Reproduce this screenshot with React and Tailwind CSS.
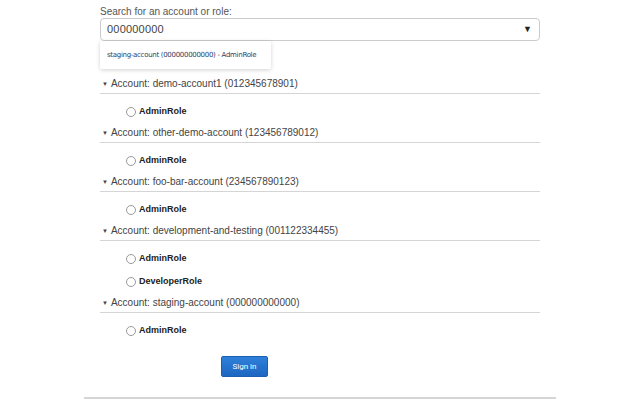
import React from 'react';

const accounts = [
  { name: 'demo-account1', id: '012345678901', roles: ['AdminRole'] },
  { name: 'other-demo-account', id: '123456789012', roles: ['AdminRole'] },
  { name: 'foo-bar-account', id: '234567890123', roles: ['AdminRole'] },
  { name: 'development-and-testing', id: '001122334455', roles: ['AdminRole', 'DeveloperRole'] },
  { name: 'staging-account', id: '000000000000', roles: ['AdminRole'] },
];

function AccountBlock({ account }) {
  return (
    <div>
      <div className="flex items-center h-[20px] border-b border-[#d5d5d5] text-[10px] text-[#444]">
        <span className="ml-[2px] mr-[3px] text-[6px] leading-none">▼</span>
        <span>Account: {account.name} ({account.id})</span>
      </div>
      <div className="pt-[6px]">
        {account.roles.map((role) => (
          <div key={role} className="flex items-center h-[23px] pl-[26px]">
            <span className="w-[10px] h-[10px] rounded-full border border-[#999] bg-white mr-[3px]"></span>
            <span className="text-[9px] font-bold text-[#222]">{role}</span>
          </div>
        ))}
      </div>
    </div>
  );
}

export default function App() {
  return (
    <div className="w-[640px] h-[400px] bg-white overflow-hidden font-['Liberation_Sans',Arial,sans-serif]">
      <div className="w-[472px] mx-auto pb-[20px] border-b-2 border-[#d5d5d5]">
        <div className="w-[440px] mx-auto pt-[5px]">
          <label className="block text-[10px] text-[#555] h-[13px] leading-[13px]">Search for an account or role:</label>
          <div className="relative">
            <div className="flex items-center justify-between h-[23px] border border-[#ccc] rounded-[4px] px-[6px] text-[11px] tracking-[0.2px] text-[#444]">
              <span>000000000</span>
              <span className="text-[9px] text-[#222] mr-[1px]">▼</span>
            </div>
            <div className="w-[171px] h-[28px] flex items-center px-[7px] bg-white rounded-[2px] shadow-[0_1px_4px_rgba(0,0,0,0.18)] text-[7px] text-[#2c3e66] font-['DejaVu_Sans',sans-serif] tracking-[-0.3px]">
              staging-account (000000000000) - AdminRole
            </div>
          </div>
          <div className="mt-[5px]">
            {accounts.map((a) => (
              <AccountBlock key={a.name} account={a} />
            ))}
          </div>
          <div className="flex pl-[121px] pt-[14px]">
            <button className="w-[47px] h-[21px] rounded-[2px] border border-[#1a5fb4] bg-gradient-to-b from-[#2f80d8] to-[#1d66c2] text-white text-[8px] font-['Roboto',sans-serif]">
              Sign in
            </button>
          </div>
        </div>
      </div>
    </div>
  );
}
